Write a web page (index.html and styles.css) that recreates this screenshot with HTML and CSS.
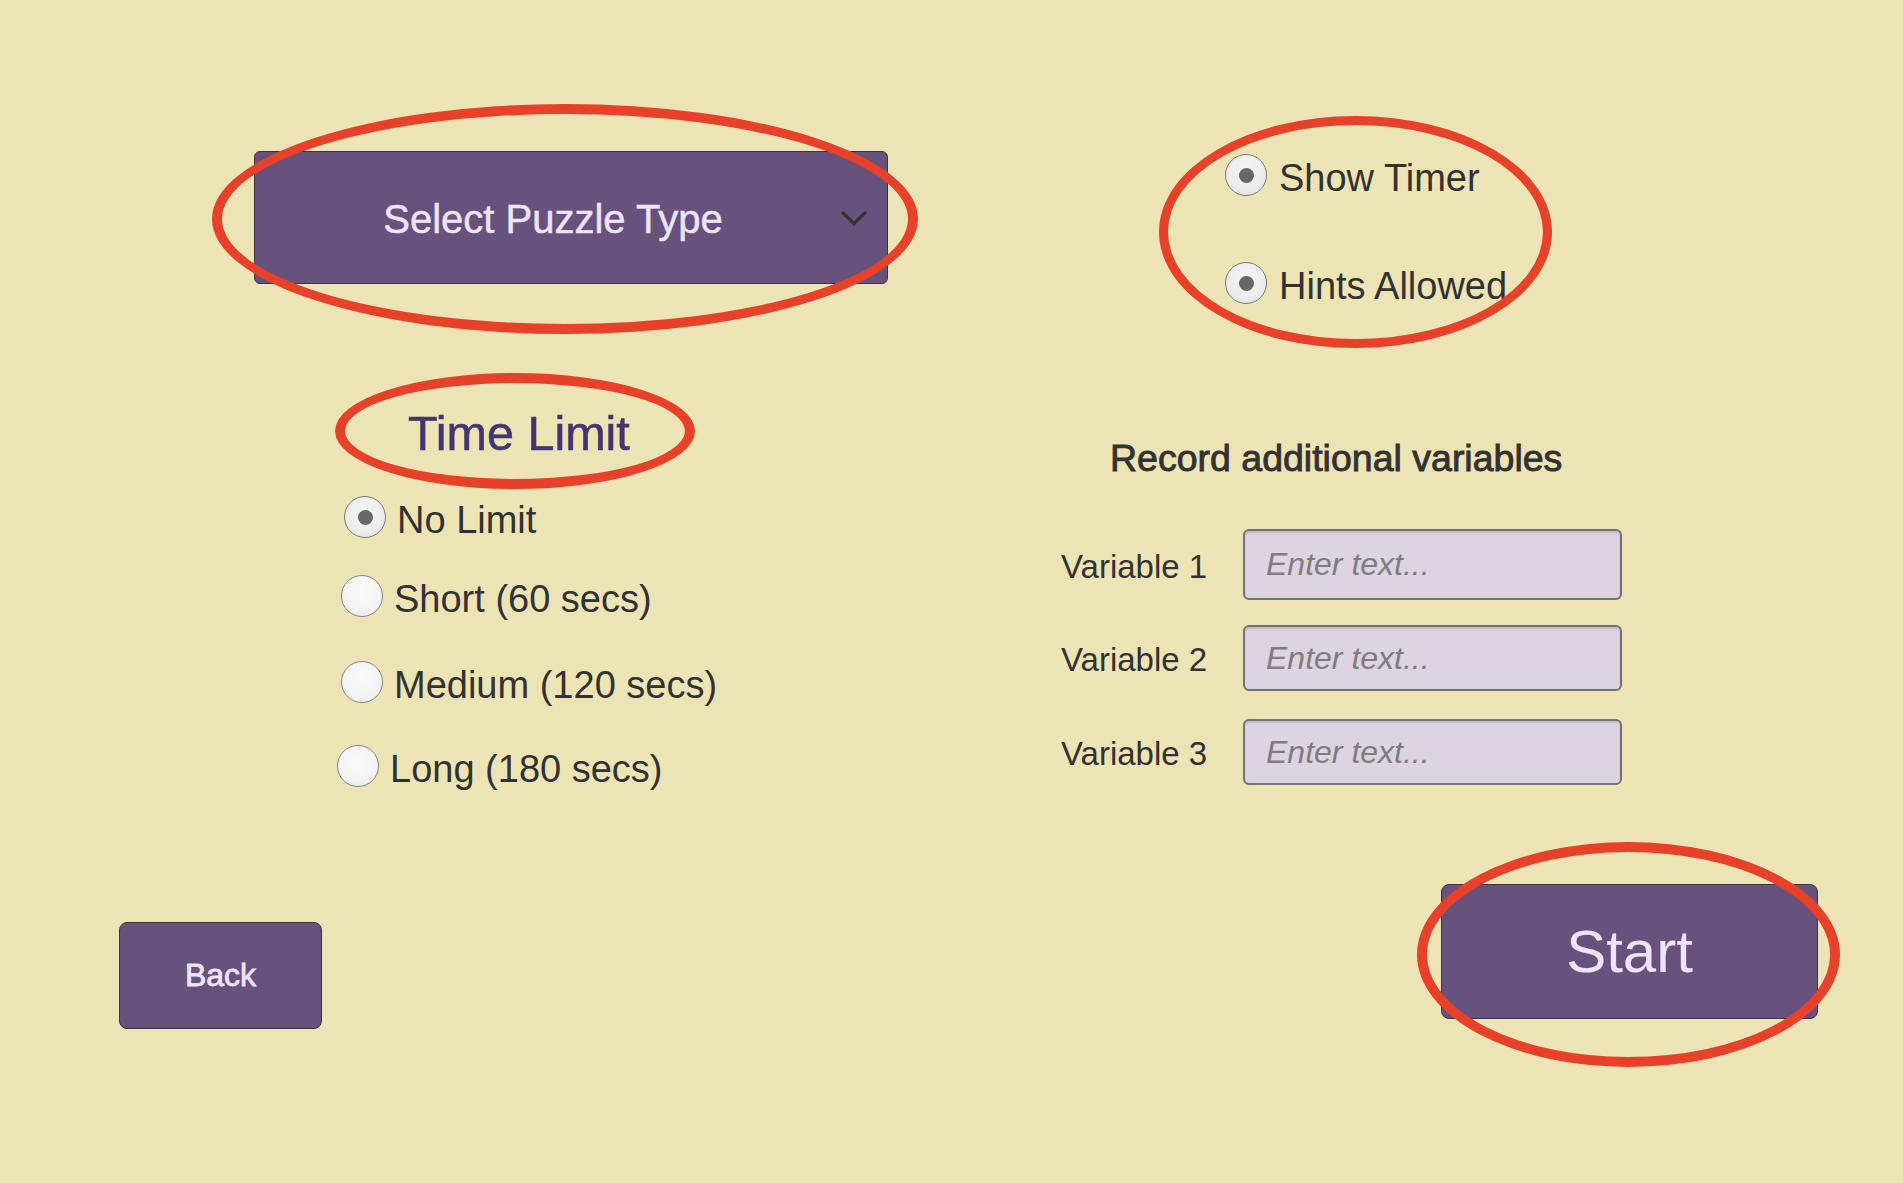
FILE: index.html
```html
<!DOCTYPE html>
<html lang="en">
<head>
<meta charset="utf-8">
<title>Puzzle Setup</title>
<link rel="stylesheet" href="styles.css">
</head>
<body>
<div class="screen">
  <div class="col col-left">
    <div class="dropdown">
      <span class="dropdown-label">Select Puzzle Type</span>
      <svg class="chevron" width="26" height="15" viewBox="0 0 26 15" aria-hidden="true">
        <polyline points="2,2 13,12.5 24,2" fill="none" stroke="#333333" stroke-width="3.2" stroke-linecap="round" stroke-linejoin="round"/>
      </svg>
    </div>

    <div class="section-title">Time Limit</div>

    <div class="radio-row row-1 nudge-right">
      <span class="radio checked"><span class="dot"></span></span>
      <span class="radio-text">No Limit</span>
    </div>
    <div class="radio-row row-2">
      <span class="radio"></span>
      <span class="radio-text">Short (60 secs)</span>
    </div>
    <div class="radio-row row-3">
      <span class="radio"></span>
      <span class="radio-text">Medium (120 secs)</span>
    </div>
    <div class="radio-row row-4 nudge-left">
      <span class="radio"></span>
      <span class="radio-text">Long (180 secs)</span>
    </div>

    <button class="btn btn-back">Back</button>
  </div>

  <div class="col col-right">
    <div class="toggle-row toggle-1">
      <span class="radio checked"><span class="dot"></span></span>
      <span class="radio-text">Show Timer</span>
    </div>
    <div class="toggle-row toggle-2">
      <span class="radio checked"><span class="dot"></span></span>
      <span class="radio-text">Hints Allowed</span>
    </div>

    <div class="record-title">Record additional variables</div>

    <div class="var-row var-1">
      <span class="var-label">Variable 1</span>
      <input class="var-input" type="text" placeholder="Enter text...">
    </div>
    <div class="var-row var-2">
      <span class="var-label">Variable 2</span>
      <input class="var-input" type="text" placeholder="Enter text...">
    </div>
    <div class="var-row var-3">
      <span class="var-label">Variable 3</span>
      <input class="var-input" type="text" placeholder="Enter text...">
    </div>

    <button class="btn btn-start">Start</button>
  </div>

  <div class="mark mark-dropdown"></div>
  <div class="mark mark-title"></div>
  <div class="mark mark-toggles"></div>
  <div class="mark mark-start"></div>
</div>
</body>
</html>
```

FILE: styles.css
```css
html, body {
  margin: 0;
  padding: 0;
  background: #ece4b5;
  overflow: hidden;
}

.screen {
  position: relative;
  width: 1903px;
  height: 1183px;
  display: grid;
  grid-template-columns: 950px 953px;
  font-family: "Liberation Sans", Arial, sans-serif;
  color: #323232;
}

.col {
  display: flex;
  flex-direction: column;
  align-items: flex-start;
}

/* ---------- dropdown ---------- */
.dropdown {
  margin: 151px 0 0 254px;
  width: 634px;
  height: 133px;
  box-sizing: border-box;
  background: #67517d;
  border: 1.5px solid #3c3343;
  border-radius: 6px;
  display: flex;
  align-items: center;
  padding-right: 20px;
}

.dropdown-label {
  flex: 1;
  text-align: center;
  padding-left: 10px;
  margin-top: 3px;
  font-size: 40px;
  line-height: 46px;
  color: #eee4f7;
  -webkit-text-stroke: 0.5px #eee4f7;
}

.chevron {
  display: block;
  margin-top: 2px;
}

/* ---------- time limit ---------- */
.section-title {
  margin: 121px 0 0 408px;
  font-size: 48.5px;
  line-height: 56px;
  color: #433670;
  -webkit-text-stroke: 0.6px #433670;
}

.radio-row,
.toggle-row {
  display: flex;
  align-items: center;
  gap: 11px;
  height: 44px;
  font-size: 38px;
  line-height: 44px;
  color: #323232;
}

.radio-row { margin-left: 341px; }
.radio-row.nudge-right { margin-left: 344px; }
.radio-row.nudge-left { margin-left: 337px; }

.row-1 { margin-top: 34px; }
.row-2 { margin-top: 35px; }
.row-3 { margin-top: 42px; }
.row-4 { margin-top: 40px; }

.radio {
  width: 42px;
  height: 42px;
  box-sizing: border-box;
  border-radius: 50%;
  border: 1.5px solid #858585;
  background: radial-gradient(circle at 50% 40%, #fbfbfb 0%, #f3f3f3 60%, #e4e4e4 100%);
  display: flex;
  align-items: center;
  justify-content: center;
  flex: none;
}

.radio.checked {
  border-color: #7a7a7a;
  background: radial-gradient(circle at 50% 40%, #f6f6f6 0%, #ececec 60%, #dcdcdc 100%);
}

.dot {
  width: 15px;
  height: 15px;
  border-radius: 50%;
  background: #676767;
}

.radio-text {
  white-space: nowrap;
  padding-top: 6px;
}

/* ---------- buttons ---------- */
.btn {
  box-sizing: border-box;
  background: #67517d;
  border: 1.5px solid #3c3343;
  border-radius: 8px;
  color: #eee4f7;
  font-family: "Liberation Sans", Arial, sans-serif;
  padding: 0;
  display: flex;
  align-items: center;
  justify-content: center;
}

.btn-back {
  margin: 134px 0 0 119px;
  width: 203px;
  height: 107px;
  font-size: 32px;
  -webkit-text-stroke: 0.8px #eee4f7;
}

.btn-start {
  margin: 99px 0 0 491px;
  width: 377px;
  height: 135px;
  font-size: 60px;
}

/* ---------- right column ---------- */
.toggle-row { margin-left: 275px; gap: 12px; }
.toggle-1 { margin-top: 153px; }
.toggle-2 { margin-top: 64px; }

.record-title {
  margin: 132px 0 0 160px;
  font-size: 37.5px;
  line-height: 43px;
  color: #323232;
  -webkit-text-stroke: 0.9px #323232;
  white-space: nowrap;
}

.var-row {
  display: flex;
  align-items: center;
  margin-left: 111px;
}

.var-1 { margin-top: 49px; }
.var-2 { margin-top: 25px; }
.var-3 { margin-top: 28px; }

.var-label {
  width: 182px;
  padding-top: 4px;
  font-size: 33px;
  line-height: 38px;
  color: #323232;
  white-space: nowrap;
}

.var-input {
  width: 379px;
  height: 66px;
  box-sizing: border-box;
  border: 2px solid #737373;
  border-radius: 6px;
  background: #dcd4df;
  box-shadow: inset 0 2px 2px rgba(0, 0, 0, 0.12);
  padding: 0 0 0 21px;
  font-family: "Liberation Sans", Arial, sans-serif;
  font-size: 32px;
  font-style: italic;
  color: #323232;
  outline: none;
}

.var-1 .var-input { height: 71px; padding-bottom: 1px; }

.var-input::placeholder {
  color: #7e7c82;
  font-style: italic;
  opacity: 1;
}

/* ---------- red annotation ellipses ---------- */
.mark {
  position: absolute;
  box-sizing: border-box;
  border: 10px solid #e8412a;
  border-radius: 50%;
  pointer-events: none;
}

.mark-dropdown { left: 212px; top: 104px; width: 706px; height: 230px; }
.mark-title    { left: 335px; top: 373px; width: 360px; height: 116px; }
.mark-toggles  { left: 1159px; top: 116px; width: 393px; height: 232px; border-width: 9px; }
.mark-start    { left: 1417px; top: 842px; width: 423px; height: 225px; }
```
